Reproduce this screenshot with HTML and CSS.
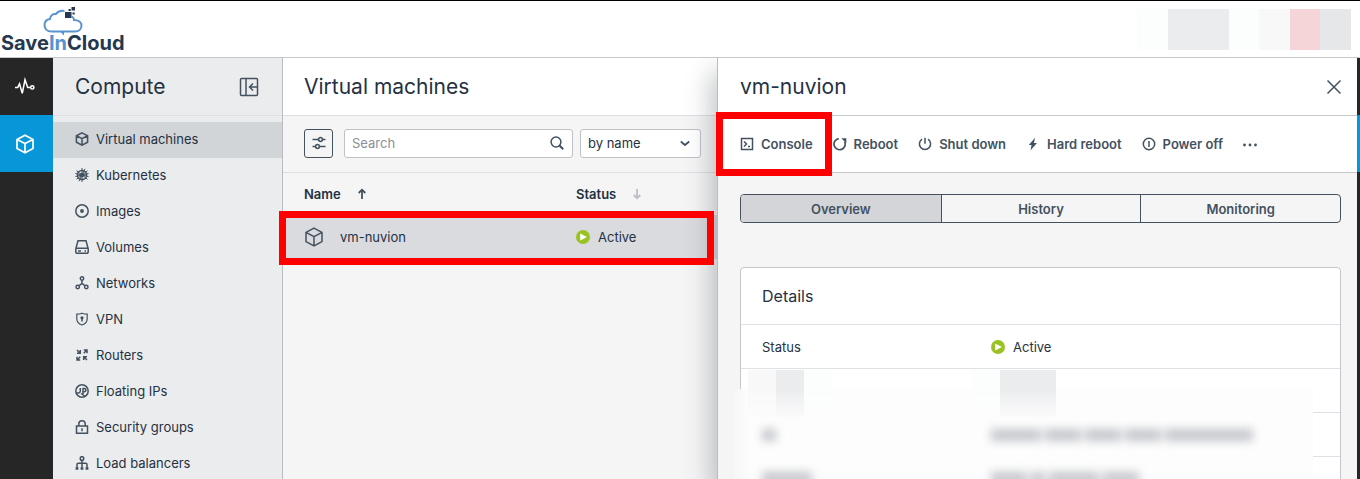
FILE: index.html
```html
<!DOCTYPE html>
<html lang="en">
<head>
    <meta charset="UTF-8">
    <meta name="viewport" content="width=device-width, initial-scale=1.0">
    <title>Virtual machines - SaveInCloud</title>
    <link rel="stylesheet" href="styles.css">
</head>
<body>
    <!-- shared shapes -->
    <svg class="sprite" aria-hidden="true">
        <symbol id="cube" viewBox="0 0 20 20">
            <path d="M10 1.2 18 5.4v9.2l-8 4.2-8-4.2V5.4zM2 5.4l8 4.2 8-4.2M10 9.6v9.2"/>
        </symbol>
        <symbol id="active" viewBox="0 0 14 14">
            <circle cx="7" cy="7" r="7" fill="#9ac224" stroke="none"/>
            <path d="M4.2 3.500v7L11 7z" fill="#fff" stroke="none"/>
        </symbol>
    </svg>

    <header class="topbar">
        <a class="logo" href="#">
            <svg class="logo-cloud" viewBox="0 0 40 30" aria-hidden="true">
                <path class="cloud" d="M18 24.500H8.500C4 24.500 1.500 21.500 1.500 18c0-3.500 2.500-5.500 5.500-6C7.500 8 10.500 6.500 13 7 15 4 18.500 3.500 21.500 4M29 9.500c1.500 1 2 2 2 3.500 4.500 0 7.500 2.200 7.500 5.500s-2.500 6-6.500 6H18"/>
                <path class="tail" d="M16.500 24h4.500v4.500z"/>
                <path class="bits" d="M22 5h6.500v6H22zM28.500 0H32v3.500h-3.500zM25.500 2h2.200v2h-2.200zM29.500 5.500h2.200v2h-2.200z"/>
            </svg>
            <span class="logo-name">Save<span class="logo-in">In</span>Cloud</span>
        </a>
        <div class="account" aria-hidden="true">
            <i class="tone-a"></i><i class="tone-c"></i><i class="tone-c"></i><i class="tone-a"></i><i class="tone-b"></i><i class="tone-pink"></i><i class="tone-d"></i>
        </div>
    </header>

    <div class="shell">
        <nav class="rail">
            <a href="#" aria-label="Monitoring">
                <svg class="icon icon-lg light" viewBox="0 0 22 20"><path d="M0 10.500h3l2-4 3 10.500L11 2l3 8.500h3"/><circle cx="19" cy="10.500" r="1.800"/></svg>
            </a>
            <a class="current" href="#" aria-label="Compute">
                <svg class="icon icon-lg light"><use href="#cube"/></svg>
            </a>
        </nav>

        <aside class="sidebar">
            <div class="panel-head">
                <h2>Compute</h2>
                <button class="plain" aria-label="Collapse menu">
                    <svg class="icon icon-lg" viewBox="0 0 20 20"><rect x="1.500" y="1.500" width="17" height="17" rx="1"/><path d="M7 1.500v17M18 10h-7M14 6.500 10.500 10l3.500 3.500"/></svg>
                </button>
            </div>
            <nav class="menu">
                <a class="selected" href="#"><svg class="icon bold"><use href="#cube"/></svg>Virtual machines</a>
                <a href="#"><svg class="icon" viewBox="0 0 14 14"><circle cx="7" cy="7" r="4.600"/><circle cx="7" cy="7" r="1.500"/><path d="M7 0v14M.4 5.400l13.200 3.200M1.500 11.300 12.500 2.700M1.500 2.700l11 8.600M4 13.200 10 .8M.4 8.600l13.200-3.200" stroke-width="1"/></svg>Kubernetes</a>
                <a href="#"><svg class="icon" viewBox="0 0 14 14"><circle cx="7" cy="7" r="6.200"/><circle class="solid" cx="7" cy="7" r="1.900"/></svg>Images</a>
                <a href="#"><svg class="icon" viewBox="0 0 14 14"><path d="M3 .8h8l2.200 8V12a1.200 1.200 0 0 1-1.200 1.200H2A1.200 1.200 0 0 1 .8 12V8.800zM1 8.300h12M3 10.900h3M9.500 10.900H11"/></svg>Volumes</a>
                <a href="#"><svg class="icon" viewBox="0 0 14 14"><circle cx="7" cy="2.500" r="1.700"/><circle cx="2.700" cy="11" r="1.700"/><circle cx="11.300" cy="11" r="1.700"/><path d="M7 4.200v3.300L4 9.700M7 7.500l3 2.200"/></svg>Networks</a>
                <a href="#"><svg class="icon" viewBox="0 0 14 14"><path d="M7 1.200c1.800.8 3.500 1 5.200 1v4.500c0 3.300-2 5.200-5.200 6.300-3.200-1.100-5.200-3-5.200-6.300V2.200c1.700 0 3.400-.2 5.200-1z" stroke-width="1.200"/><circle class="solid" cx="7" cy="5.800" r="1.600"/><path d="M7 6v3.500"/></svg>VPN</a>
                <a href="#"><svg class="icon" viewBox="0 0 14 14"><path d="M2 2l3.200 3.200M5.300 2v3.300H2M8.700 5.300 12 2M8.800 2H12v3.200M5.300 8.700 2 12M2 8.800V12h3.200M12 12 8.700 8.700M8.700 12V8.700H12"/></svg>Routers</a>
                <a href="#"><svg class="icon" viewBox="0 0 14 14"><circle cx="7" cy="7" r="6.200"/><path d="M1 8.700c2.500 1 4.300 0 4.300-1.700V4M8 10V4.500h1.300a1.500 1.500 0 0 1 0 3.200H8M6 9.500l4.500 3"/></svg>Floating IPs</a>
                <a href="#"><svg class="icon" viewBox="0 0 14 14"><path d="M1.500 6h11v7.200h-11zM3.800 6V4a3.200 3.200 0 0 1 6.400 0v2M7 8.200v3"/></svg>Security groups</a>
                <a href="#"><svg class="icon" viewBox="0 0 14 14"><circle cx="7" cy="2.500" r="1.800"/><path d="M7 4.300v7.500M2 12V8.500q0-1.200 1.200-1.200h7.600q1.200 0 1.200 1.200V12"/><path d="M.6 12.400h2.800M5.600 12.400h2.800M10.600 12.400h2.800" stroke-width="2.500"/></svg>Load balancers</a>
            </nav>
        </aside>

        <main class="list">
            <div class="panel-head">
                <h1>Virtual machines</h1>
            </div>
            <div class="filters">
                <button class="filter-button" aria-label="Filters">
                    <svg class="icon" viewBox="0 0 14 14"><path d="M.5 3.500h6M10.500 3.500h3M.5 10.500h3M7.500 10.500h6"/><circle cx="8.500" cy="3.500" r="1.900"/><circle cx="5.500" cy="10.500" r="1.900"/></svg>
                </button>
                <label class="field search">
                    <input type="text" placeholder="Search" aria-label="Search">
                    <svg class="icon" viewBox="0 0 14 14"><circle cx="6" cy="6" r="4.900"/><path d="M9.500 9.500l3.700 3.700" stroke-width="2"/></svg>
                </label>
                <label class="field sort">
                    <select aria-label="Sort by">
                        <option>by name</option>
                        <option>by status</option>
                    </select>
                    <svg class="icon" viewBox="0 0 14 14"><path d="M2.800 5.500 7 9l4.200-3.500" stroke-width="1.800"/></svg>
                </label>
            </div>
            <table>
                <thead>
                    <tr>
                        <th class="col-name"><button class="th-sort">Name <svg class="icon" viewBox="0 0 14 14"><path d="M7 12V3M3.700 6 7 2.700 10.300 6" stroke-width="1.800"/></svg></button></th>
                        <th><button class="th-sort">Status <svg class="icon muted" viewBox="0 0 14 14"><path d="M7 2v9M3.700 8 7 11.300 10.300 8" stroke-width="1.800"/></svg></button></th>
                    </tr>
                </thead>
                <tbody>
                    <tr class="marked">
                        <td class="col-name"><a class="vm" href="#"><svg class="icon icon-lg"><use href="#cube"/></svg>vm-nuvion</a></td>
                        <td><span class="status"><svg class="icon"><use href="#active"/></svg>Active</span></td>
                    </tr>
                </tbody>
            </table>
        </main>

        <section class="detail">
            <div class="panel-head">
                <h2>vm-nuvion</h2>
                <button class="plain" aria-label="Close">
                    <svg class="icon close" viewBox="0 0 16 16"><path d="M1.500 1.500l13 13M14.500 1.500l-13 13"/></svg>
                </button>
            </div>
            <div class="actions">
                <button class="action marked"><svg class="icon" viewBox="0 0 14 14"><path d="M1.500 1.500h11v11h-11z"/><path d="M4 4.500 6.500 7 4 9.500M8 9.500h2"/></svg>Console</button>
                <button class="action"><svg class="icon" viewBox="0 0 14 14"><path d="M5.800 1.600a5.600 5.600 0 1 0 5.800 3" stroke-width="1.700"/><path class="solid" d="M8.300 1.300h5v5z"/></svg>Reboot</button>
                <button class="action"><svg class="icon" viewBox="0 0 14 14"><path d="M4 2.200a5.600 5.600 0 1 0 6 0M7 .8v6"/></svg>Shut down</button>
                <button class="action"><svg class="icon" viewBox="0 0 14 14"><path class="solid" d="M9 .8 2.800 8h2.700L4.600 13.200 11 6H8z"/></svg>Hard reboot</button>
                <button class="action"><svg class="icon" viewBox="0 0 14 14"><circle cx="7" cy="7" r="5.700"/><path d="M7 4v6"/></svg>Power off</button>
                <button class="action" aria-label="More"><svg class="icon" viewBox="0 0 14 14"><circle class="solid" cx="1.500" cy="8" r="1.400"/><circle class="solid" cx="7" cy="8" r="1.400"/><circle class="solid" cx="12.500" cy="8" r="1.400"/></svg></button>
            </div>
            <div class="detail-body">
                <div class="tabs">
                    <button class="selected">Overview</button>
                    <button>History</button>
                    <button>Monitoring</button>
                </div>
                <div class="card">
                    <h3>Details</h3>
                    <dl>
                        <div class="row"><dt>Status</dt><dd class="status"><svg class="icon"><use href="#active"/></svg>Active</dd></div>
                        <div class="row"></div>
                        <div class="row"></div>
                        <div class="row"></div>
                    </dl>
                    <div class="redacted" aria-hidden="true">
                        <div class="tiles">
                            <i class="tone-b"></i><i class="tone-c"></i><i class="tone-a"></i><i class="tone-a far"></i><i class="tone-c"></i><i class="tone-c"></i>
                        </div>
                        <div class="smudge">
                            <div class="smudge-row">
                                <span><i class="w-s"></i></span>
                                <span><i class="w-l"></i><i class="w-m"></i><i class="w-m"></i><i class="w-m"></i><i class="w-xl"></i></span>
                            </div>
                            <div class="smudge-row">
                                <span><i class="w-l"></i></span>
                                <span><i class="w-m"></i><i class="w-s"></i><i class="w-l"></i><i class="w-m"></i></span>
                            </div>
                        </div>
                    </div>
                </div>
            </div>
        </section>

        <div class="edge"></div>
    </div>
</body>
</html>
```

FILE: styles.css
```css
:root {
    --text: #243142;
    --icon: #44525f;
    --line: #c4c7cb;
    --line-light: #dddfe3;
    --bg: #f5f5f6;
    --dark: #262626;
    --blue: #0797d9;
    --mark: #ff0000;
}

* {
    box-sizing: border-box;
}

body {
    margin: 0;
    height: 100vh;
    display: flex;
    flex-direction: column;
    overflow: hidden;
    font-family: Inter, "Liberation Sans", sans-serif;
    font-size: 13px;
    line-height: 20px;
    color: var(--text);
    background: #fff;
}

h1, h2, h3, dl, dd {
    margin: 0;
}

h1, h2 {
    font-size: 21px;
    font-weight: 400;
    line-height: 28px;
}

a {
    color: inherit;
    text-decoration: none;
}

button, input, select {
    font: inherit;
    color: inherit;
}

button {
    padding: 0;
    border: 0;
    background: none;
    cursor: pointer;
}

/* icons */
.sprite {
    position: absolute;
    width: 0;
    height: 0;
}

.icon {
    display: block;
    flex: none;
    width: 14px;
    height: 14px;
    fill: none;
    stroke: var(--icon);
    stroke-width: 1.5;
}

.icon-lg {
    width: 20px;
    height: 20px;
}

.icon.light {
    stroke: #fff;
    stroke-width: 1.7;
}

.icon.bold {
    stroke-width: 2.2;
}

.icon.muted {
    stroke: #bcbfc4;
}

.icon.close {
    width: 16px;
    height: 16px;
}

.solid {
    fill: var(--icon);
    stroke: none;
}

.plain {
    display: flex;
}

/* top bar */
.topbar {
    flex: none;
    display: flex;
    justify-content: space-between;
    align-items: center;
    height: 58px;
    padding-right: 9px;
    border-top: 1px solid #000;
    border-bottom: 1px solid var(--line);
}

.logo {
    display: flex;
    flex-direction: column;
    align-items: center;
    padding: 2px 0 0 1px;
    color: #24384f;
}

.logo-cloud {
    width: 40px;
    height: 30px;
    margin-bottom: -4px;
}

.cloud {
    fill: none;
    stroke: #5893d0;
    stroke-width: 2;
}

.tail {
    fill: #5893d0;
}

.bits {
    fill: #24384f;
}

.logo-name {
    font-size: 20px;
    font-weight: 700;
    line-height: 20px;
}

.logo-in {
    color: #5893d0;
}

.account {
    display: grid;
    grid-template-columns: repeat(7, 1fr);
    width: 214px;
    height: 41px;
}

.tone-a { background: #fcfdfd; }
.tone-b { background: #f8f8f9; }
.tone-c { background: #ebecee; }
.tone-d { background: #e6e7e9; }
.tone-pink { background: #f6d5d8; }

/* layout */
.shell {
    flex: 1;
    min-height: 0;
    display: flex;
}

.panel-head {
    display: flex;
    align-items: center;
    justify-content: space-between;
    height: 58px;
    border-bottom: 1px solid var(--line-light);
}

.rail {
    flex: none;
    width: 53px;
    background: var(--dark);
}

.rail a {
    display: flex;
    align-items: center;
    justify-content: center;
    height: 57px;
    padding-right: 4px;
}

.rail .current {
    background: var(--blue);
}

.edge {
    flex: none;
    width: 3px;
    background: linear-gradient(var(--dark) 57px, var(--blue) 57px, var(--blue) 114px, var(--dark) 114px);
}

.sidebar {
    flex: none;
    width: 230px;
    border-right: 1px solid #b9bcc3;
    background: #ebecee;
}

.sidebar .panel-head {
    padding: 0 23px 0 22px;
}

.menu {
    padding-top: 6px;
}

.menu a {
    display: flex;
    align-items: center;
    gap: 7px;
    height: 36px;
    padding: 0 0 2px 22px;
}

.menu .selected {
    background: #d1d5d8;
}

/* machine list */
.list {
    flex: none;
    width: 434px;
    background: var(--bg);
}

.list .panel-head {
    padding-left: 21px;
    background: #fff;
}

.filters {
    display: flex;
    align-items: center;
    height: 57px;
    padding: 0 16px 2px 21px;
    border-bottom: 1px solid var(--line-light);
}

.filter-button {
    flex: none;
    display: flex;
    align-items: center;
    justify-content: center;
    width: 29px;
    height: 29px;
    margin-right: 11px;
    border: 1px solid var(--icon);
    border-radius: 3px;
}

.field {
    display: flex;
    align-items: center;
    height: 29px;
    padding-right: 8px;
    border: 1px solid #bec1c6;
    border-radius: 3px;
    background: #fff;
}

.field input, .field select {
    flex: 1;
    min-width: 0;
    padding: 0 0 0 7px;
    border: 0;
    outline: 0;
    background: none;
    appearance: none;
}

.field input::placeholder {
    color: #8a9098;
    opacity: 1;
}

.search {
    flex: 1;
    min-width: 0;
    margin-right: 7px;
}

.sort {
    flex: none;
    width: 121px;
}

table {
    width: 100%;
    border-collapse: collapse;
}

th, td {
    padding: 0;
    text-align: left;
}

th {
    height: 42px;
}

td {
    height: 44px;
}

.col-name {
    width: 293px;
    padding-left: 21px;
}

.th-sort {
    display: flex;
    align-items: center;
    gap: 14px;
    font-weight: 600;
}

.vm {
    display: flex;
    align-items: center;
    gap: 16px;
}

.status {
    display: flex;
    align-items: center;
    gap: 8px;
}

tr.marked {
    position: relative;
    background: #dadbdf;
}

/* highlighted row and action */
.marked::after {
    content: "";
    position: absolute;
    z-index: 3;
    border: 7px solid var(--mark);
    pointer-events: none;
}

tr.marked::after {
    inset: -4px 3px -6px -4px;
}

.action.marked::after {
    inset: -4px -19px -4px -24px;
}

/* detail panel */
.detail {
    flex: 1;
    min-width: 0;
    position: relative;
    border-left: 1px solid #b9bcc3;
    background: var(--bg);
    box-shadow: -6px 14px 24px rgba(40, 45, 55, 0.28);
    clip-path: inset(0 0 0 -40px);
}

.detail .panel-head {
    padding: 0 15px 0 22px;
    border-color: var(--line);
    background: #fff;
}

.actions {
    display: flex;
    align-items: center;
    gap: 20px;
    height: 57px;
    padding: 0 22px;
    border-bottom: 1px solid var(--line);
    background: #fff;
}

.action {
    position: relative;
    display: flex;
    align-items: center;
    gap: 7px;
    height: 56px;
    font-weight: 600;
    color: var(--icon);
    white-space: nowrap;
}

.detail-body {
    padding: 21px 16px 21px 22px;
}

.tabs {
    display: grid;
    grid-template-columns: repeat(3, 1fr);
    height: 29px;
    border: 1px solid var(--icon);
    border-radius: 4px;
    overflow: hidden;
}

.tabs button {
    font-weight: 600;
    color: var(--icon);
}

.tabs button + button {
    border-left: 1px solid var(--icon);
}

.tabs .selected {
    background: #d3d5d9;
}

.card {
    position: relative;
    margin-top: 44px;
    border: 1px solid var(--line);
    border-radius: 4px;
    background: #fff;
}

.card h3 {
    padding: 18px 21px;
    font-size: 16px;
    font-weight: 400;
    line-height: 20px;
}

.row {
    display: grid;
    grid-template-columns: 229px 1fr;
    align-items: center;
    height: 44px;
    padding: 0 21px;
    border-top: 1px solid #dfe2e4;
}

/* hidden values */
.redacted {
    position: absolute;
    top: 102px;
    right: 27px;
    bottom: -1px;
    left: -8px;
    display: flex;
    flex-direction: column;
}

.tiles {
    flex: none;
    position: relative;
    z-index: 1;
    display: flex;
    height: 50px;
    margin-bottom: -31px;
    padding-left: 15px;
    mask-image: linear-gradient(#000 20px, transparent);
}

.tiles i {
    width: 28px;
}

.tiles .far {
    margin-left: 140px;
}

.smudge {
    flex: 1;
    padding: 40px 29px 0;
    background: linear-gradient(90deg, #f6f6f7, #fdfdfd 16px);
}

.smudge-row {
    display: grid;
    grid-template-columns: 229px 1fr;
    height: 43px;
    filter: blur(5px);
}

.smudge-row span {
    display: flex;
    gap: 4px;
}

.smudge i {
    height: 12px;
    background: #c4c6cb;
}

.w-s { width: 14px; }
.w-m { width: 36px; }
.w-l { width: 50px; }
.w-xl { width: 88px; }
```
